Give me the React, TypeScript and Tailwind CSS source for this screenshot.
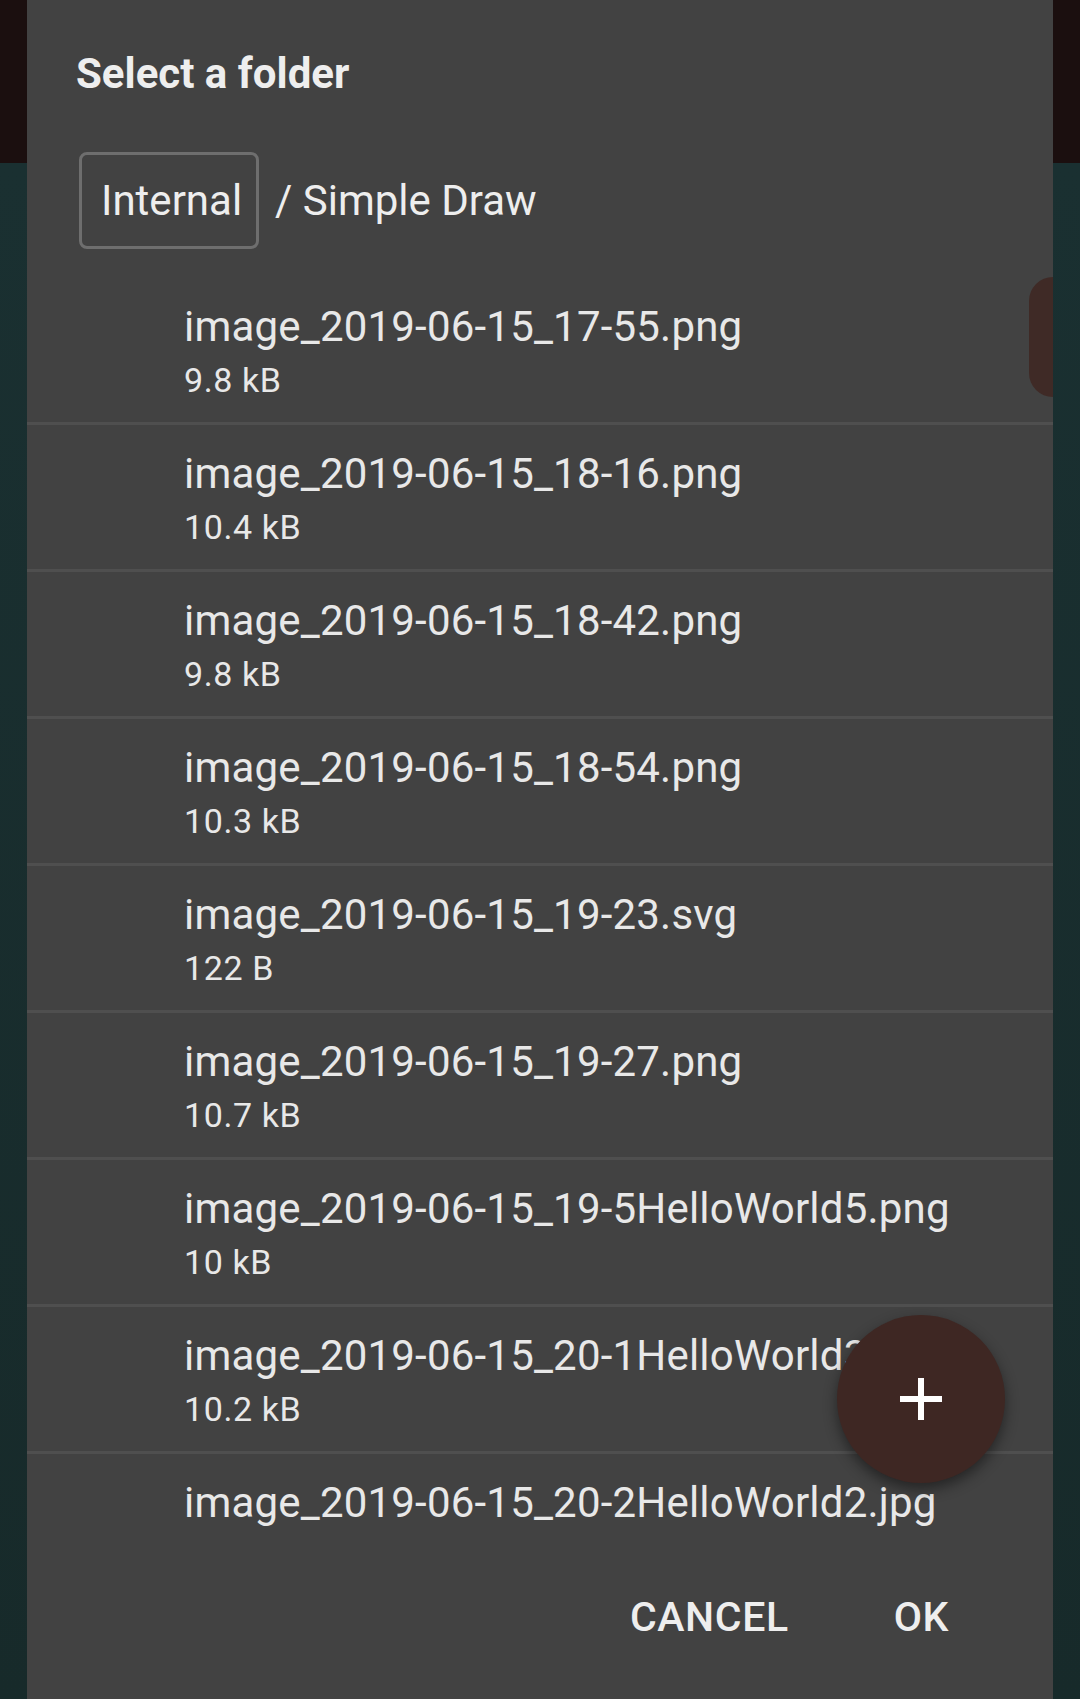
import React from "react";

const files = [
  { name: "image_2019-06-15_17-55.png", size: "9.8 kB" },
  { name: "image_2019-06-15_18-16.png", size: "10.4 kB" },
  { name: "image_2019-06-15_18-42.png", size: "9.8 kB" },
  { name: "image_2019-06-15_18-54.png", size: "10.3 kB" },
  { name: "image_2019-06-15_19-23.svg", size: "122 B" },
  { name: "image_2019-06-15_19-27.png", size: "10.7 kB" },
  { name: "image_2019-06-15_19-5HelloWorld5.png", size: "10 kB" },
  { name: "image_2019-06-15_20-1HelloWorld3.png", size: "10.2 kB" },
  { name: "image_2019-06-15_20-2HelloWorld2.jpg", size: "" },
];

export default function App() {
  return (
    <div className="relative w-[1080px] h-[1699px] overflow-hidden bg-[#182c2d] font-['Roboto',sans-serif]">
      <div className="h-[163px] bg-[#1b0f0f]" />
      <div className="h-[1536px] bg-gradient-to-b from-[#1a3031] to-[#172a2a]" />

      {/* Dialog */}
      <div className="absolute left-[27px] top-0 w-[1026px] h-[1699px] bg-[#424242] flex flex-col">
        <div className="pl-[49px] pt-[50px] h-[152px] text-[42px] leading-[48px] font-bold text-[#eeeeee]">
          Select a folder
        </div>
        <div className="flex items-center h-[97px] pl-[52px] text-[42px] leading-[48px] text-[#eeeeee]">
          <div className="h-[97px] w-[180px] border-[3px] border-[#6e6e6e] rounded-[8px] flex items-center pl-[19px]">
            Internal
          </div>
          <div className="ml-[16px]">/ Simple Draw</div>
        </div>
        <div className="mt-[29px] h-[1259px] overflow-hidden">
          {files.map((f) => (
            <div key={f.name} className="h-[147px] border-b-[3px] border-[#4f4f4f] pl-[157px] pt-[25px]">
              <div className="text-[42px] leading-[48px] tracking-[0.2px] text-[#e8e8e8] whitespace-nowrap">{f.name}</div>
              {f.size && (
                <div className="mt-[9px] text-[34px] leading-[40px] tracking-[0.6px] text-[#e8e8e8]">{f.size}</div>
              )}
            </div>
          ))}
        </div>
        <div className="flex justify-end pr-[104px] pt-[56px] text-[41px] leading-[48px] font-medium text-[#eeeeee] tracking-[0.6px]">
          <span>CANCEL</span>
          <span className="ml-[105px]">OK</span>
        </div>
      </div>

      {/* fast scroll thumb */}
      <div className="absolute left-[1029px] top-[277px] w-[24px] h-[120px] rounded-l-[24px] bg-[#3f2a26]" />

      {/* FAB */}
      <div className="absolute left-[837px] top-[1315px] w-[168px] h-[168px] rounded-full bg-[#3e2723] shadow-[0_6px_14px_rgba(0,0,0,0.45)] flex items-center justify-center">
        <svg width="42" height="42" viewBox="0 0 42 42">
          <rect x="0" y="18" width="42" height="6" fill="#ffffff" />
          <rect x="18" y="0" width="6" height="42" fill="#ffffff" />
        </svg>
      </div>
    </div>
  );
}
